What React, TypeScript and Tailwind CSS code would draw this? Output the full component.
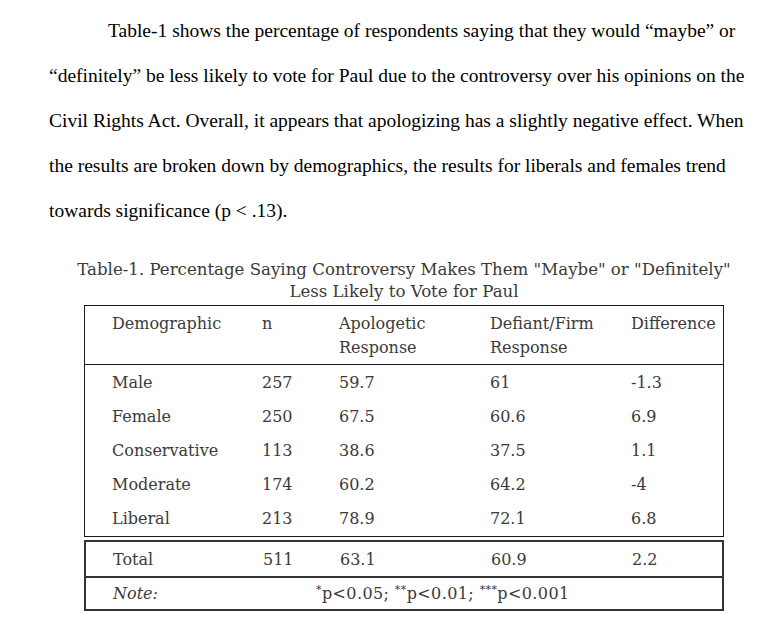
const rows = [
  { d: "Male", n: "257", a: "59.7", f: "61", diff: "-1.3" },
  { d: "Female", n: "250", a: "67.5", f: "60.6", diff: "6.9" },
  { d: "Conservative", n: "113", a: "38.6", f: "37.5", diff: "1.1" },
  { d: "Moderate", n: "174", a: "60.2", f: "64.2", diff: "-4" },
  { d: "Liberal", n: "213", a: "78.9", f: "72.1", diff: "6.8" },
];

const lines = [
  "Table-1 shows the percentage of respondents saying that they would “maybe” or",
  "“definitely” be less likely to vote for Paul due to the controversy over his opinions on the",
  "Civil Rights Act. Overall, it appears that apologizing has a slightly negative effect. When",
  "the results are broken down by demographics, the results for liberals and females trend",
  "towards significance (p < .13).",
];

const cols = "grid grid-cols-[150px_77px_151px_141px_1fr] pl-[27px]";

export default function App() {
  return (
    <div className="min-h-[630px] w-[783px] bg-white">
      <div className="pl-[49px] pt-[8px] font-['Liberation_Serif',serif] text-[19.5px] leading-[45px] text-black">
        {lines.map((l, i) => (
          <div key={i} className={i === 0 ? "whitespace-nowrap pl-[59px]" : "whitespace-nowrap"}>
            {l}
          </div>
        ))}
      </div>

      <div className="ml-[84px] mt-[26px] w-[640px] font-['DejaVu_Serif',serif] text-[16px] text-[#3a3a3a]">
        <div className="flex flex-col items-center text-[16.6px] leading-[22px]">
          <span className="whitespace-nowrap">
            Table-1. Percentage Saying Controversy Makes Them "Maybe" or "Definitely"
          </span>
          <span className="whitespace-nowrap">Less Likely to Vote for Paul</span>
        </div>

        <div className="mt-[2px] border border-[#1a1a1a]">
          <div className={`${cols} border-b border-[#1a1a1a] pb-[4px] pt-[6px] leading-[24px]`}>
            <span>Demographic</span>
            <span>n</span>
            <span>
              Apologetic
              <br />
              Response
            </span>
            <span>
              Defiant/Firm
              <br />
              Response
            </span>
            <span>Difference</span>
          </div>
          <div className="pt-[1px]">
            {rows.map((r) => (
              <div key={r.d} className={`${cols} h-[34px] items-center`}>
                <span>{r.d}</span>
                <span>{r.n}</span>
                <span>{r.a}</span>
                <span>{r.f}</span>
                <span>{r.diff}</span>
              </div>
            ))}
          </div>
        </div>

        <div className="mt-[3px] border-2 border-[#333]">
          <div className={`${cols} h-[34px] items-center pt-[1px]`}>
            <span>Total</span>
            <span>511</span>
            <span>63.1</span>
            <span>60.9</span>
            <span>2.2</span>
          </div>
          <div className="flex h-[33px] items-center border-t-2 border-[#333] pl-[27px]">
            <span className="w-[203px] italic">Note:</span>
            <span className="tracking-[0.4px]">
              <sup className="text-[11px]">*</sup>p&lt;0.05; <sup className="text-[11px]">**</sup>p&lt;0.01;{" "}
              <sup className="text-[11px]">***</sup>p&lt;0.001
            </span>
          </div>
        </div>
      </div>
    </div>
  );
}
